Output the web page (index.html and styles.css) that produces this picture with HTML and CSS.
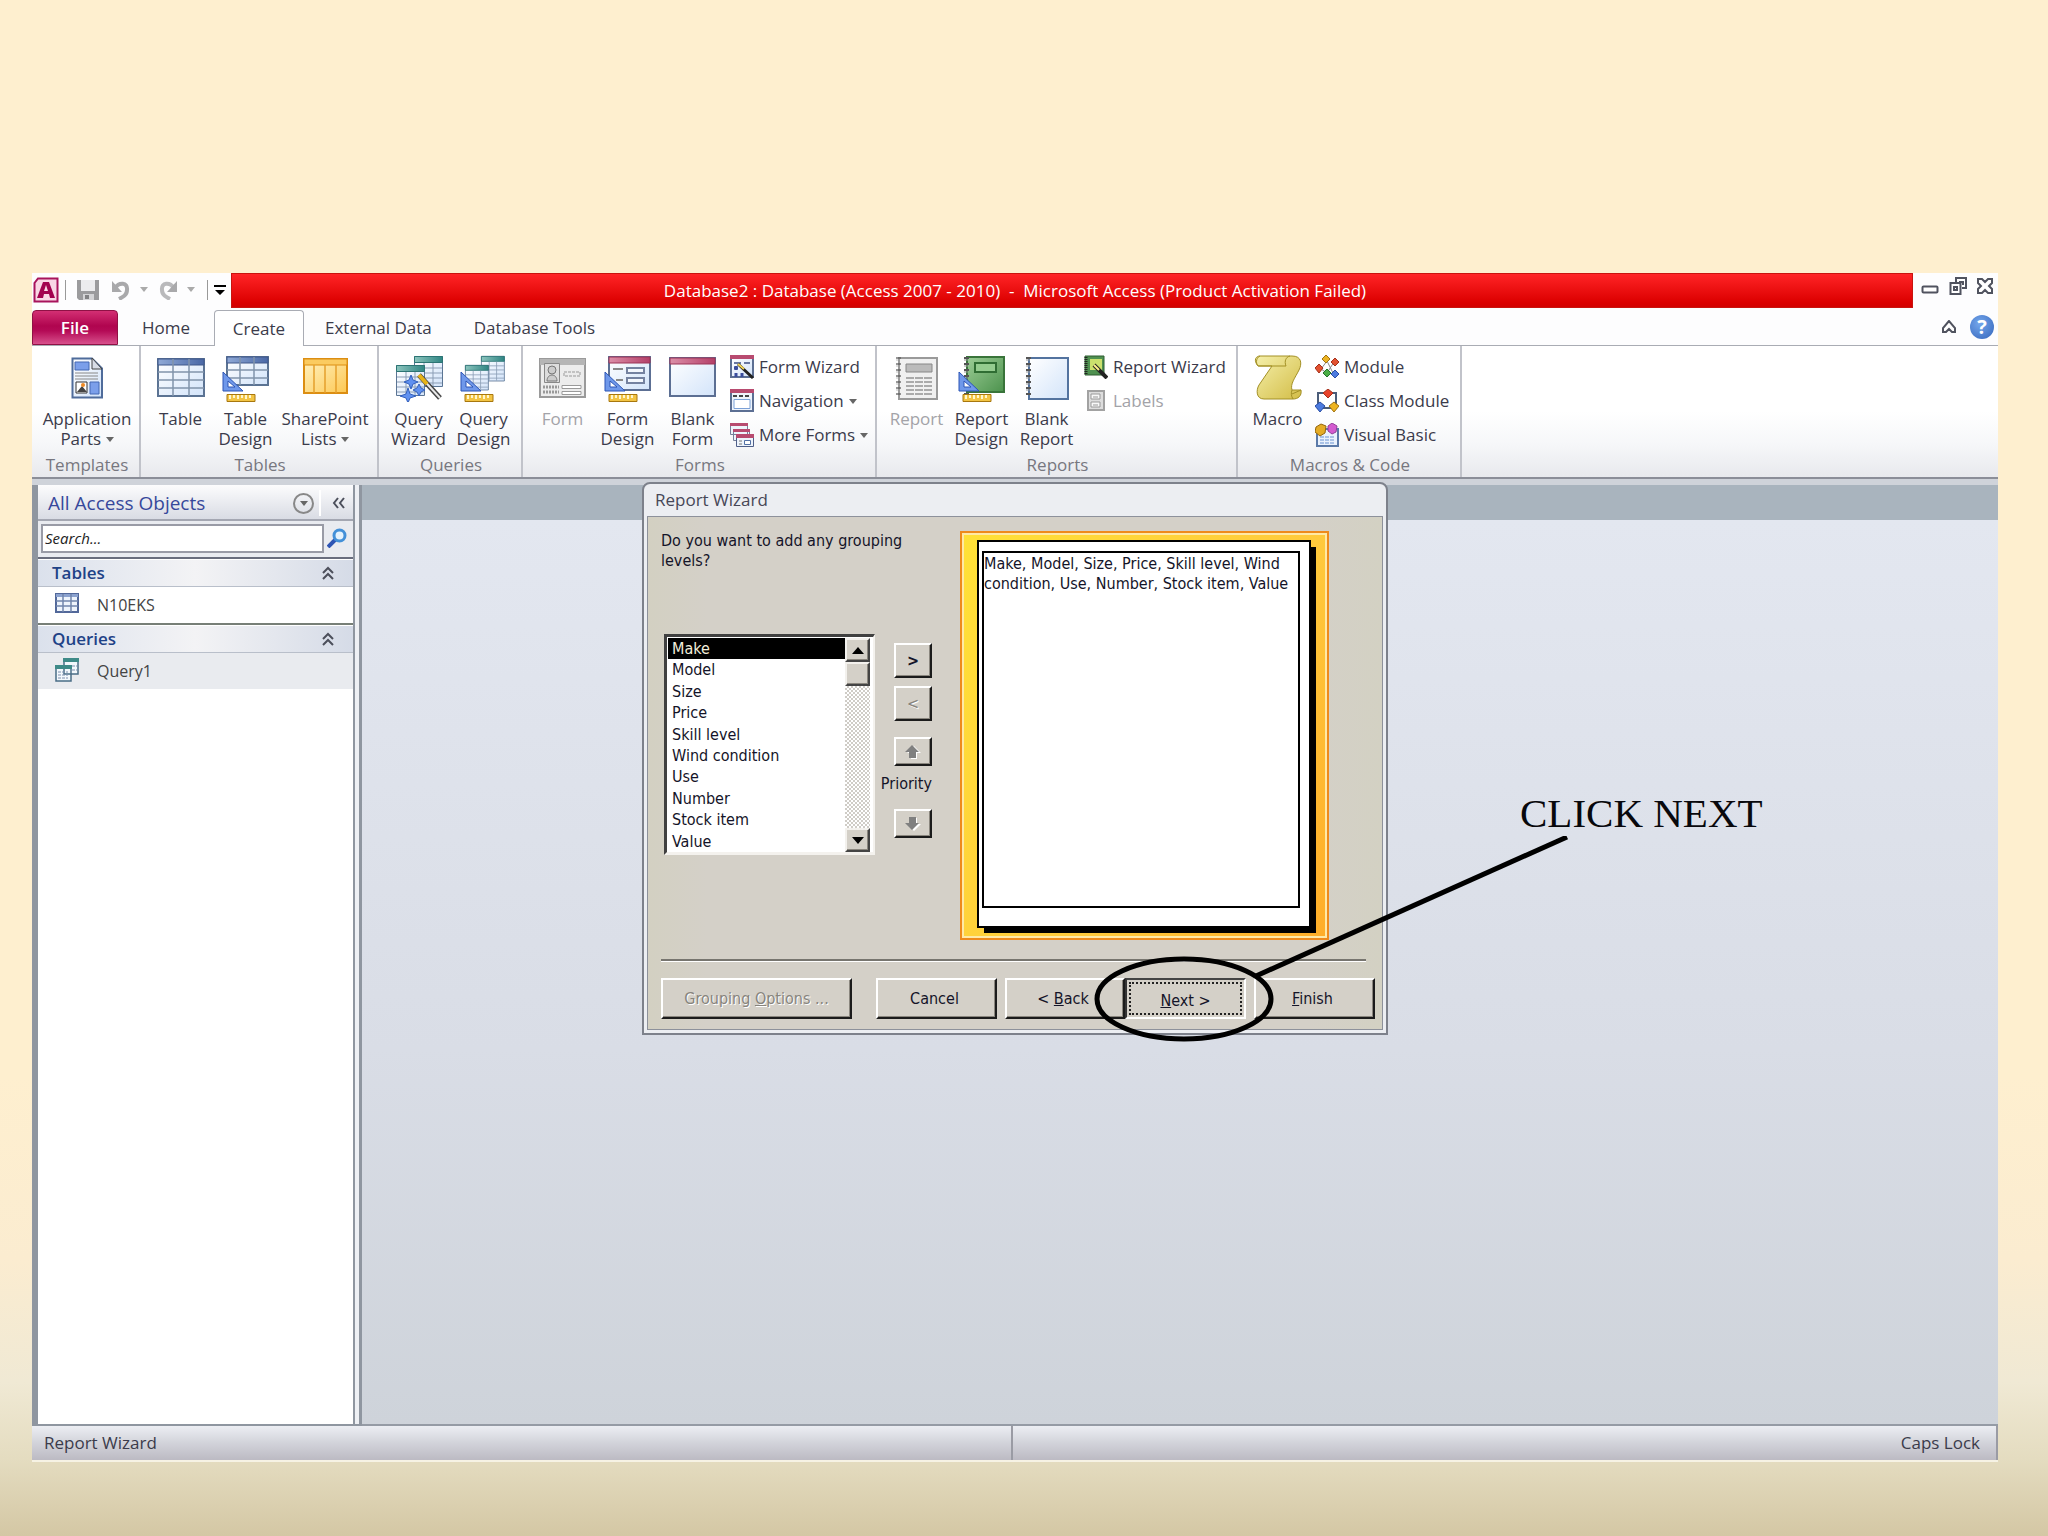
FILE: index.html
```html
<!DOCTYPE html>
<html lang="en">
<head>
<meta charset="utf-8">
<title>Database2 : Database (Access 2007 - 2010)</title>
<link rel="stylesheet" href="styles.css">
</head>
<body>
<svg class="defs" aria-hidden="true">
  <defs>
    <linearGradient id="pale" x1="0" y1="0" x2="1" y2="1"><stop offset="0" stop-color="#fff"/><stop offset="1" stop-color="#d3e4fa"/></linearGradient>
    <linearGradient id="navy" x1="0" y1="0" x2="1" y2="0"><stop offset="0" stop-color="#8fa9d6"/><stop offset="1" stop-color="#4a68a6"/></linearGradient>
    <linearGradient id="teal" x1="0" y1="0" x2="1" y2="0"><stop offset="0" stop-color="#8cc4bd"/><stop offset="1" stop-color="#2f8583"/></linearGradient>
    <linearGradient id="rose" x1="0" y1="0" x2="1" y2="0"><stop offset="0" stop-color="#dc8fa8"/><stop offset="1" stop-color="#b43f68"/></linearGradient>
    <linearGradient id="gold" x1="0" y1="0" x2="1" y2="1"><stop offset="0" stop-color="#fff3c4"/><stop offset="1" stop-color="#fdc853"/></linearGradient>
    <linearGradient id="green" x1="0" y1="0" x2="1" y2="1"><stop offset="0" stop-color="#9ccd96"/><stop offset="1" stop-color="#4c924d"/></linearGradient>
    <linearGradient id="scroll" x1="0" y1="0" x2="1" y2="1"><stop offset="0" stop-color="#f5f0ab"/><stop offset="1" stop-color="#d3bd47"/></linearGradient>
    <g id="setsquare"><path d="M0 18V37H20Z" fill="#6f98ea" stroke="#2c55b5"/><path d="M5 27v6h7z" fill="#fff" stroke="#2c55b5"/><path d="M4 40.500h28v7H4z" fill="#f2c444" stroke="#a8770e"/><path d="M7 41v4m4-4v3m4-3v4m4-4v3m4-3v4m4-4v3" stroke="#fff6ce" stroke-width="2"/></g>
    <g id="querytable"><path d="M.5.5h28v30H.5z" fill="url(#pale)" stroke="#5b7594"/><path d="M.5.500h28v6H.5z" fill="url(#teal)" stroke="#2c7474"/><path d="M1 12h27M1 17h27M1 22h27M1 27h27" stroke="#8b9db5"/><path d="M10 7v23M19 7v23" stroke="#8b9db5"/></g>
    <g id="binding"><path d="M3 4h5m-5 6h5m-5 6h5m-5 6h5m-5 6h5m-5 6h5m-5 6h5" stroke="#555" stroke-width="2"/><path d="M3 6h4m-4 6h4m-4 6h4m-4 6h4m-4 6h4m-4 6h4" stroke="#999"/></g>
  </defs>
</svg>

<main class="slide">
<div class="app">
  <header class="titlebar">
    <div class="quick">
      <svg class="i26" viewBox="0 0 26 26"><path d="M5 1.500H24.500V24.500H1.500V6z" fill="#f9d7e5" stroke="#a8145c" stroke-width="2"/><path d="M4 21 10 5h6l6 16h-5l-1-4h-5l-1 4zM11 14h4l-2-6z" fill="#a3024f"/></svg>
      <span class="bar"></span>
      <button aria-label="Save"><svg class="i24" viewBox="0 0 24 24"><path d="M1 2h22v20H3l-2-2z" fill="#9b9b9d"/><path d="M5 2h14v11H5z" fill="#ececee"/><path d="M7 16h11v6H7z" fill="#d4d4d6"/><path d="M9 17h4v4H9z" fill="#828284"/></svg></button>
      <button aria-label="Undo"><svg class="i20" viewBox="0 0 20 20"><path d="M4 8C8 2 17 2 16 10c0 5-4 7-8 9" fill="none" stroke="#a9a9ab" stroke-width="4"/><path d="M1 1v11h10z" fill="#a9a9ab"/></svg></button>
      <span class="caret soft"></span>
      <button aria-label="Redo"><svg class="i20" viewBox="0 0 20 20"><path d="M16 8C12 2 3 2 4 10c0 5 4 7 8 9" fill="none" stroke="#b9b9bb" stroke-width="4"/><path d="M19 1v11H9z" fill="#a9a9ab"/></svg></button>
      <span class="caret soft"></span>
      <span class="bar last"></span>
      <button class="customise" aria-label="Customise toolbar"><svg viewBox="0 0 12 12"><path d="M0 1h12v2H0zM1 6h10l-5 5z"/></svg></button>
    </div>
    <h1 class="caption">Database2 : Database (Access 2007 - 2010)&nbsp; -&nbsp; Microsoft Access (Product Activation Failed)</h1>
    <div class="sys">
      <button aria-label="Minimise"><svg class="i18" viewBox="0 0 18 18"><rect x="1.500" y="9.500" width="15" height="6" rx="1" class="ln"/></svg></button>
      <button aria-label="Restore"><svg class="i18" viewBox="0 0 18 18"><path d="M7 5V1h10v10h-4M10 5h4v3" class="ln"/><path d="M1.500 6h10v11h-10zM5 10h3v3H5z" class="ln"/></svg></button>
      <button aria-label="Close"><svg class="i18" viewBox="0 0 18 18"><path d="M2 2h4l3 3 3-3h4v4l-3 3 3 3v4h-4l-3-3-3 3H2v-4l3-3-3-3z" class="ln"/></svg></button>
    </div>
  </header>

  <nav class="tabs">
    <button class="tab file">File</button>
    <button class="tab home">Home</button>
    <button class="tab on">Create</button>
    <button class="tab">External Data</button>
    <button class="tab">Database Tools</button>
    <span class="tabtools">
      <button aria-label="Minimise the ribbon"><svg class="i14" viewBox="0 0 14 14"><path d="M7 1 1 8v4h3l3-3 3 3h3V8z" class="ln"/></svg></button>
      <button class="help" aria-label="Help">?</button>
    </span>
  </nav>

  <section class="ribbon">
    <div class="group"><div class="tools">
      <button class="big wide"><svg viewBox="0 0 48 48"><path d="M9.500 4.500H29l10 10V43.500H9.500z" fill="url(#pale)" stroke="#4f6c9b" stroke-width="2"/><path d="M29 4v11h10z" fill="#d8dde6" stroke="#444"/><path d="M12 8h14v8H12zM27 28h9v12h-9z" fill="#7b9fea" stroke="#4468b4"/><path d="M12 19h23M12 22h23M12 25h23" stroke="#888"/><path d="M13 28h11v11H13z" fill="#fff" stroke="#333"/><path d="m14 38 5-6 5 6z" fill="#444"/><circle cx="20" cy="31" r="2" fill="#ee8a25"/></svg><span>Application<br>Parts <i class="caret"></i></span></button>
    </div><h2>Templates</h2></div>

    <div class="group"><div class="tools">
      <button class="big"><svg viewBox="0 0 48 48"><path d="M1 5h46v37H1z" fill="url(#pale)" stroke="#5b7393" stroke-width="2"/><path d="M1 5h46v6H1z" fill="url(#navy)" stroke="#41598a"/><path d="M1 18h46M1 26h46M1 34h46M16 5v37M32 5v37" stroke="#8194ab" stroke-width="1.500"/></svg><span>Table</span></button>
      <button class="big"><svg viewBox="0 0 48 48"><path d="M5 3h41v28H5z" fill="url(#pale)" stroke="#5b7393" stroke-width="2"/><path d="M5 3h41v6H5z" fill="url(#navy)" stroke="#41598a"/><path d="M5 16h41M5 24h41M18 3v28M32 3v28" stroke="#8194ab" stroke-width="1.500"/><use href="#setsquare" x="1"/></svg><span>Table<br>Design</span></button>
      <button class="big wide"><svg viewBox="0 0 48 48"><path d="M3 5h43v34H3z" fill="url(#gold)" stroke="#dc8e12" stroke-width="2"/><path d="M3 5h43v6H3z" fill="#fbcb60" stroke="#dc8e12"/><path d="M13 11v28M24 11v28M35 11v28" stroke="#e5a02c" stroke-width="1.500"/></svg><span>SharePoint<br>Lists <i class="caret"></i></span></button>
    </div><h2>Tables</h2></div>

    <div class="group"><div class="tools">
      <button class="big"><svg viewBox="0 0 48 48"><use href="#querytable" x="19" y="2"/><use href="#querytable" x="1" y="11"/><path d="m24 21 21 23" stroke="#444" stroke-width="5"/><path d="m24 21 21 23" stroke="#e9e9e9" stroke-width="2"/><path d="m24 21 8 9" stroke="#e6b317" stroke-width="4"/><path d="m16 21 2 5 5 2-5 2-2 5-2-5-5-2 5-2zM24 30l2 4 4 2-4 2-2 4-2-4-4-2 4-2zM13 34l2 6 6 2-6 2-2 5-2-5-6-2 6-2z" fill="#5f90f0" stroke="#3461bd"/></svg><span>Query<br>Wizard</span></button>
      <button class="big"><svg viewBox="0 0 48 48"><use href="#querytable" transform="translate(21 2) scale(.82)"/><use href="#querytable" transform="translate(5 11) scale(.82)"/><use href="#setsquare" x="1"/></svg><span>Query<br>Design</span></button>
    </div><h2>Queries</h2></div>

    <div class="group"><div class="tools">
      <button class="big" disabled><svg viewBox="0 0 48 48"><path d="M1 5h45v38H1z" fill="#ececec" stroke="#9a9a9a" stroke-width="2"/><path d="M1 5h45v6H1z" fill="#b5b5b5"/><path d="M5.500 9.500h15v19h-15z" fill="#ddd" stroke="#888"/><circle cx="13" cy="16" r="4" fill="#ccc" stroke="#777"/><path d="M8 27c0-8 10-8 10 0z" fill="#ccc" stroke="#777"/><path d="M25 18h16v4H25z" fill="none" stroke="#999" stroke-dasharray="3 1"/><path d="M4 33h16M4 38h16" stroke="#999" stroke-width="3" stroke-dasharray="2 1"/><path d="M23 31.500h19v3H23zm0 6h19v3H23z" fill="#fff" stroke="#999"/></svg><span>Form</span></button>
      <button class="big"><svg viewBox="0 0 48 48"><path d="M5 3h41v33H5z" fill="url(#pale)" stroke="#5c6f93" stroke-width="2"/><path d="M5 3h41v6H5z" fill="url(#rose)" stroke="#9b3557"/><path d="M9 15h10M12 26h7" stroke="#888" stroke-width="2"/><path d="M23 14h17v5H23zm0 10h17v5H23z" fill="#f3f7fd" stroke="#7482a0" stroke-width="2"/><use href="#setsquare" x="1"/></svg><span>Form<br>Design</span></button>
      <button class="big"><svg viewBox="0 0 48 48"><path d="M1 4h45v38H1z" fill="url(#pale)" stroke="#5c6f93" stroke-width="2"/><path d="M1 4h45v6H1z" fill="url(#rose)" stroke="#9b3557"/></svg><span>Blank<br>Form</span></button>
      <div class="stack">
        <button class="small"><svg viewBox="0 0 24 24"><path d="M1 1h22v21H1z" fill="url(#pale)" stroke="#5c6f93" stroke-width="2"/><path d="M0 0h24v4H0z" fill="#b84b70"/><path d="M4 8h7m3 0h6" stroke="#6877a0" stroke-width="2"/><path d="m8 9 15 14" stroke="#222" stroke-width="3"/><path d="m8 9 6 5" stroke="#f0d457" stroke-width="2"/><path d="M4 13h4m-2-2v4m0 3v4m6-4v4" stroke="#3a4d9c" stroke-width="3"/></svg>Form Wizard</button>
        <button class="small"><svg viewBox="0 0 24 24"><path d="M1 1h22v21H1z" fill="#eef4fc" stroke="#5c6f93" stroke-width="2"/><path d="M0 0h24v4H0z" fill="#b84b70"/><path d="M3 7h18" stroke="#444" stroke-width="2" stroke-dasharray="4 2"/><path d="M4 10.500h16v9H4z" fill="#fff" stroke="#7ba0d6"/></svg>Navigation <i class="caret"></i></button>
        <button class="small"><svg viewBox="0 0 24 24"><g fill="#eef4fc" stroke="#77809a"><path d="M.5.500h17v11H.5zM3.500 6.500h16v11h-16z"/></g><path d="M0 0h18v3H0zM3 6h17v3H3z" fill="#b84b70"/><path d="M6.500 11.500h17v12h-17z" fill="#eef4fc" stroke="#4f5f88"/><path d="M6 11h18v4H6z" fill="#b84b70"/><path d="M9 18h3m-3 3h3" stroke="#777"/><path d="M14.500 17.500h6v4h-6z" fill="#fff" stroke="#5270a5"/></svg>More Forms <i class="caret"></i></button>
      </div>
    </div><h2>Forms</h2></div>

    <div class="group"><div class="tools">
      <button class="big" disabled><svg viewBox="0 0 48 48"><path d="M6 4h38v41H6z" fill="#f0f0f0" stroke="#9a9a9a" stroke-width="2"/><use href="#binding" opacity=".6"/><path d="M13 10h26v8H13z" fill="#bbb" stroke="#888"/><path d="M13 24h26M13 28h26M13 32h26M13 36h26M13 40h26" stroke="#aaa" stroke-width="2" stroke-dasharray="8 1"/></svg><span>Report</span></button>
      <button class="big"><svg viewBox="0 0 48 48"><path d="M9 3h37v35H9z" fill="url(#green)" stroke="#39743a" stroke-width="2"/><path d="M17 9h21v9H17z" fill="#94cc8f" stroke="#2f6d33" stroke-width="2"/><use href="#binding" x="3"/><use href="#setsquare" x="1"/></svg><span>Report<br>Design</span></button>
      <button class="big"><svg viewBox="0 0 48 48"><path d="M6 4h39v41H6z" fill="url(#pale)" stroke="#53739f" stroke-width="2"/><use href="#binding"/></svg><span>Blank<br>Report</span></button>
      <div class="stack roomy">
        <button class="small"><svg viewBox="0 0 24 24"><path d="M1 1h19v19H1z" fill="#4f9150" stroke="#2e5d31"/><path d="M6 4h12v11H6z" fill="#cbe06d"/><path d="M2 2v18" stroke="#222" stroke-width="3" stroke-dasharray="1 1"/><path d="m10 10 13 13" stroke="#222" stroke-width="4"/><path d="m10 10 5 5" stroke="#fff08a" stroke-width="2"/></svg>Report Wizard</button>
        <button class="small" disabled><svg viewBox="0 0 24 24"><path d="M4 2h16v19H4z" fill="#ddd" stroke="#a2a2a2" stroke-width="2"/><path d="M7 5h9v5H7zm0 8h9v5H7z" fill="#f8f8f8" stroke="#999"/><path d="M9 8h5m-5 8h5" stroke="#999"/></svg>Labels</button>
      </div>
    </div><h2>Reports</h2></div>

    <div class="group"><div class="tools">
      <button class="big"><svg viewBox="0 0 48 48"><path d="M4 12C-1 6 2 2 6 2h32c10 0 10 8 7 14-4 8-9 14-7 20h9c1 6-3 9-8 9H10C2 45 2 36 5 31l13-19z" fill="url(#scroll)" stroke="#a39025"/><path d="M6 2c-5 2-4 10-1 10h27c-2-5 0-9 4-10M38 36c-1 3-1 6 1 9m8-9-9 4" fill="none" stroke="#a39025"/></svg><span>Macro</span></button>
      <div class="stack">
        <button class="small"><svg viewBox="0 0 24 24"><path d="m6 14 6-8 6 12M6 14l6 4 7-11" fill="none" stroke="#888"/><path d="m11 0 4 4-4 4-4-4z" fill="#edb422" stroke="#a17311"/><path d="m20 3 4 4-4 4-4-4zM4 9l4 4-4 5-4-5z" fill="#e2512f" stroke="#a3301b"/><path d="m12 14 4 4-4 4-4-4z" fill="#4aad45" stroke="#24722c"/><path d="m20 15 4 4-4 4-4-4z" fill="#4c7bdf" stroke="#2a4ea5"/></svg>Module</button>
        <button class="small"><svg viewBox="0 0 24 24"><path d="M3 4h18v15H3z" fill="#fff" stroke="#4b5d79" stroke-width="2"/><path d="m13 0 5 4-5 5-5-5z" fill="#e8432b" stroke="#a3301b"/><path d="m5 13 5 4-5 6-5-6z" fill="#4c7bdf" stroke="#2a4ea5"/><path d="m19 13 5 4-5 6-5-6z" fill="#edb422" stroke="#a17311"/></svg>Class Module</button>
        <button class="small"><svg viewBox="0 0 24 24"><path d="M2 6h21v17H2z" fill="#eaf2fd" stroke="#5b7aa9" stroke-width="2"/><path d="M5 14h15M5 17h15M5 20h15" stroke="#6b93d1" stroke-dasharray="4 1"/><path d="m6 1 5 2-1 7-5 3-5-4 1-5z" fill="#e5ac26" stroke="#94660c"/><path d="m17 0 5 3-1 6-4 2-4-3v-5z" fill="#d35bd0" stroke="#913f98"/></svg>Visual Basic</button>
      </div>
    </div><h2>Macros &amp; Code</h2></div>
  </section>

  <div class="desk">
    <aside class="pane">
      <div class="panehead"><h2>All Access Objects</h2><button class="round" aria-label="Choose objects"><i class="caret"></i></button><button class="fold" aria-label="Close pane"><svg class="i14" viewBox="0 0 14 14"><path d="M7 2 3 7l4 5M13 2 9 7l4 5" class="chev"/></svg></button></div>
      <div class="search"><input type="text" placeholder="Search..." aria-label="Search"><button aria-label="Go"><svg class="i20" viewBox="0 0 20 20"><path d="m1 19 8-8" stroke="#2e55b4" stroke-width="4"/><circle cx="12.500" cy="7.500" r="5.500" fill="#e4f2fd" stroke="#4390d8" stroke-width="3"/></svg></button></div>
      <section class="objs">
        <h3>Tables<svg class="i14" viewBox="0 0 14 14"><path d="M2 7l5-5 5 5M2 13l5-5 5 5" class="chev"/></svg></h3>
        <a href="#" class="obj"><svg class="i24" viewBox="0 0 24 24"><path d="M1 2h22v18H1z" fill="#eef4fc" stroke="#52689a" stroke-width="2"/><path d="M1 2h22v3H1z" fill="#8ba2cf"/><path d="M1 9h22M1 14h22M8 2v18M16 2v18" stroke="#7185ac" stroke-width="1.500"/></svg>N10EKS</a>
      </section>
      <section class="objs">
        <h3>Queries<svg class="i14" viewBox="0 0 14 14"><path d="M2 7l5-5 5 5M2 13l5-5 5 5" class="chev"/></svg></h3>
        <a href="#" class="obj sel"><svg class="i24" viewBox="0 0 24 24"><g fill="#f3f8fc" stroke="#4a6d86" stroke-width="1.500"><path d="M9 1h14v15H9zM1 8h15v15H1z"/></g><path d="M8 0h16v4H8zM0 7h17v4H0z" fill="#3e8a88"/><path d="M3 14h10M3 17h10M3 20h10M17 8h5M17 12h5" stroke="#7e8fae" stroke-dasharray="3 1"/></svg>Query1</a>
      </section>
    </aside>
    <div class="canvas"></div>

    <section class="dialog" role="dialog" aria-labelledby="dlg">
      <h2 id="dlg">Report Wizard</h2>
      <div class="dbody">
        <div class="cols">
          <div class="pick">
            <p>Do you want to add any grouping levels?</p>
            <div class="row">
              <div class="list">
                <ul role="listbox" aria-label="Fields">
                  <li role="option" aria-selected="true">Make</li><li role="option">Model</li><li role="option">Size</li><li role="option">Price</li><li role="option">Skill level</li><li role="option">Wind condition</li><li role="option">Use</li><li role="option">Number</li><li role="option">Stock item</li><li role="option">Value</li>
                </ul>
                <div class="scroll"><button class="btn" aria-label="Scroll up"><svg viewBox="0 0 12 7"><path d="M0 7 6 0l6 7z"/></svg></button><span class="btn thumb"></span><button class="btn down" aria-label="Scroll down"><svg viewBox="0 0 12 7"><path d="M0 0h12L6 7z"/></svg></button></div>
              </div>
              <div class="moves">
                <button class="btn move"><b>&gt;</b></button>
                <button class="btn move" disabled>&lt;</button>
                <button class="btn order up" disabled aria-label="Raise priority"><svg viewBox="0 0 16 14"><path d="M9 1l7 7h-4v6H6V8H2z" fill="#fff"/><path d="M7 0l7 7h-3v6H4V7H0z" fill="#808080"/></svg></button>
                <span>Priority</span>
                <button class="btn order" disabled aria-label="Lower priority"><svg viewBox="0 0 16 14"><path d="M9 14l7-7h-4V1H6v6H2z" fill="#fff"/><path d="M7 13l7-7h-3V0H4v6H0z" fill="#808080"/></svg></button>
              </div>
            </div>
          </div>
          <div class="preview"><div class="paper"><p>Make, Model, Size, Price, Skill level, Wind condition, Use, Number, Stock item, Value</p></div></div>
        </div>
        <hr>
        <div class="actions">
          <button class="btn opts" disabled><span>Grouping <u>O</u>ptions ...</span></button>
          <button class="btn cancel">Cancel</button>
          <button class="btn back"><span>&lt; <u>B</u>ack</span></button>
          <button class="btn next"><span><u>N</u>ext &gt;</span></button>
          <button class="btn finish"><span><u>F</u>inish</span></button>
        </div>
      </div>
    </section>

    <svg class="ink" viewBox="0 0 480 206" aria-hidden="true"><ellipse cx="91" cy="163" rx="87" ry="40"/><path d="M163 140 474 1"/></svg>
    <p class="note">CLICK NEXT</p>
  </div>

  <footer class="status"><span>Report Wizard</span><span class="caps">Caps Lock</span></footer>
</div>
</main>
</body>
</html>
```
FILE: styles.css
```css
* { box-sizing: border-box; }
body { margin: 0; font: 17px/20px "Open Sans", "Noto Sans", sans-serif; color: #3b3b4b; }
h1, h2, h3, p, ul { margin: 0; padding: 0; font-weight: 400; font-size: inherit; list-style: none; }
button { font: inherit; color: inherit; background: none; border: 0; padding: 0; }
svg { display: block; flex: none; }
.defs { position: absolute; width: 0; height: 0; }
.i14 { width: 14px; height: 14px; }
.i18 { width: 18px; height: 18px; }
.i20 { width: 20px; height: 20px; }
.i24 { width: 24px; height: 24px; }
.i26 { width: 26px; height: 26px; }
.ln { fill: #fff; stroke: #50535f; stroke-width: 2; }
.chev { fill: none; stroke: #4c4f5b; stroke-width: 2; }
.caret { display: inline-block; vertical-align: 3px; border: 4px solid transparent; border-top: 5px solid #666; border-bottom: 0; }
.caret.soft { border-top-color: #aaa; }

.slide { min-height: 100vh; padding: 273px 50px 74px 32px; display: flex; background: linear-gradient(#feefcf 0 70%, #fbecd0 82%, #f0e9d4 90%, #e4dcc0 95%, #d4c7a4); }
.app { flex: 1; display: flex; flex-direction: column; background: #fdfdfe; min-width: 1500px; }

.titlebar { display: flex; height: 37px; }
.quick { width: 199px; display: flex; align-items: center; padding: 0 5px 4px 1px; }
.bar { width: 2px; height: 20px; background: #999; margin: 0 10px 0 6px; }
.bar.last { margin: 0 6px 0 12px; }
.quick .caret { margin: 0 10px 0 9px; }
.quick .caret + .bar { margin-left: 2px; }
.quick button + button { margin-left: 11px; }
.customise svg { width: 12px; height: 12px; }
.caption { flex: 1; height: 35px; border: 1px solid #c9140f; background: linear-gradient(#ff2426, #dc0000 85%, #d20000); color: #fff; text-align: center; line-height: 34px; padding-right: 114px; font-weight: 500; }
.sys { width: 85px; display: flex; justify-content: space-between; padding: 4px 4px 0 8px; align-items: flex-start; }

.tabs { display: flex; height: 36px; border-bottom: 1px solid #a9acb4; }
.tab { height: 36px; padding: 0 21px; }
.tab.file { width: 86px; height: 35px; padding: 0; border-radius: 4px 4px 0 0; border: 1px solid #8f1145; color: #fff; font-weight: 600; background: linear-gradient(#d32f73, #b0054f 45%, #b40a56 60%, #d8508c); }
.tab.home { width: 96px; }
.tab.on { width: 90px; padding: 0; background: #fff; border: 1px solid #a9acb4; border-bottom: 0; border-radius: 4px 4px 0 0; }
.tabtools { margin-left: auto; display: flex; align-items: center; gap: 14px; padding: 0 4px 2px 0; }
.help { width: 24px; height: 24px; border-radius: 50%; background: radial-gradient(circle at 40% 35%, #74a7ec, #3465bb); color: #fff; font-weight: 700; font-size: 20px; }

.ribbon { display: flex; height: 133px; padding-left: 1px; background: linear-gradient(#fff 50%, #f6f7f9 75%, #e8e9ed); border-bottom: 2px solid #8b8e98; }
.group { display: flex; flex-direction: column; border-right: 2px solid #c1c3ca; padding: 0 5px 0 7px; }
.tools { display: flex; flex: 1; }
.group h2 { text-align: center; height: 24px; line-height: 24px; color: #77777f; }
.big { width: 65px; display: flex; flex-direction: column; align-items: center; gap: 7px; padding-top: 8px; white-space: nowrap; }
.big.wide { width: 94px; }
.big svg { width: 48px; height: 48px; }
.ribbon button:disabled { color: #a3a3a8; }
.stack { width: 140px; margin-left: 5px; padding-top: 4px; }
.stack.roomy { width: 147px; }
.small { display: flex; align-items: center; gap: 5px; height: 34px; white-space: nowrap; }
.small svg { width: 24px; height: 24px; }

.desk { flex: 1; display: flex; position: relative; border-top: 6px solid #cfd3da; min-height: 560px; }
.pane { width: 330px; border: solid #8f96a0; border-width: 0 3px 2px 6px; padding-right: 6px; background: linear-gradient(90deg, #fff 315px, #8f96a0 315px 317px, #eef0f4 317px); }
.panehead { display: flex; align-items: center; height: 36px; padding: 2px 8px 0 10px; background: linear-gradient(#fcfcfd, #d9dce4); border-bottom: 2px solid #a4a7b2; }
.panehead h2 { flex: 1; font-size: 19px; color: #37489b; }
.round { width: 21px; height: 21px; border: 2px solid #888; border-radius: 50%; display: flex; align-items: center; justify-content: center; }
.fold { border-left: 2px solid #fff; margin-left: 5px; padding: 6px 0 6px 10px; }
.search { display: flex; align-items: center; gap: 3px; height: 38px; padding: 0 0 2px 3px; background: #e9ebf0; border-bottom: 2px solid #696d7d; }
.search input { flex: 1; min-width: 0; height: 29px; border: 2px solid #999ba6; background: #fff; font: italic 15px "Open Sans", sans-serif; padding: 0 2px; }
.search input::placeholder { color: #222; opacity: 1; }
.search button { margin-right: 6px; }
.objs { border-bottom: 2px solid #777f77; }
.objs:last-child { border: 0; }
.objs h3 { display: flex; justify-content: space-between; align-items: center; height: 27px; margin-top: 1px; padding: 0 18px 0 14px; color: #1e4287; font-weight: 600; background: linear-gradient(90deg, #dbe1ec, #f3f3f5 50%, #d5dbe7); border-bottom: 1px solid #b9bfca; }
.obj { display: flex; gap: 18px; padding: 5px 17px 7px; height: 36px; color: #444; text-decoration: none; font-size: 16px; line-height: 26px; }
.sel { background: #e9ebef; }
.canvas { flex: 1; border-bottom: 2px solid #959ba5; background: linear-gradient(#a9b4be 35px, #e3e7f0 35px, #d9dde6 60%, #ced3da); }

.dialog { position: absolute; left: 610px; top: -3px; width: 746px; border: 2px solid #7d818b; border-radius: 8px 8px 0 0; background: #eceef2; padding: 0 3px 3px; color: #141428; }
.dialog h2 { height: 32px; line-height: 31px; padding-left: 8px; color: #474757; }
.dbody { border: 1px solid #8d919b; background: linear-gradient(90deg, #d3d0c2, #d4d0c8 8% 90%, #d3d1c3); padding: 14px 7px 10px 13px; font: 16px/20px "DejaVu Sans Condensed", sans-serif; }
.cols { display: flex; }
.pick { width: 299px; }
.pick p { width: 262px; height: 103px; }
.row { display: flex; padding-left: 3px; gap: 2px; }
.list { width: 211px; height: 221px; display: flex; border: solid; border-width: 3px 2px 3px 3px; border-color: #404040 #f4f2ee #f4f2ee #404040; background: #fff; padding: 1px 3px 0 1px; }
.list ul { flex: 1; height: 214px; display: grid; grid-auto-rows: 1fr; line-height: 21px; }
.list li { padding-left: 4px; }
.list li[aria-selected] { background: #000; color: #f2eeda; }
.btn { border: solid; border-width: 2px; border-color: #fff #1b1b1b #1b1b1b #fff; background: #d4d0c8; box-shadow: inset -1px -1px #8a867e; display: flex; align-items: center; justify-content: center; white-space: nowrap; }
.btn:disabled { color: #87847d; text-shadow: 1px 1px #fff; }
.scroll { width: 25px; display: flex; flex-direction: column; background: repeating-conic-gradient(#cfccc6 0 25%, #fff 0 50%) 0 0 / 4px 4px; }
.scroll .btn { height: 24px; border-color: #f3f1ed #444 #444 #f3f1ed; }
.scroll svg { width: 12px; height: 7px; }
.scroll .down { margin-top: auto; }
.moves { width: 55px; display: flex; flex-direction: column; align-items: flex-end; padding-top: 9px; }
.move { width: 38px; height: 35px; margin-bottom: 8px; }
.order { width: 38px; height: 29px; }
.up { margin-top: 8px; }
.order svg { width: 16px; height: 14px; }
.moves span { margin: 8px 0 15px; }
.preview { width: 369px; height: 409px; border: 2px solid #ee8a1c; outline: 2px solid #ffe9a5; outline-offset: -4px; background: linear-gradient(120deg, #ffe137, #ffca3c 60%, #ffad28); padding: 7px 16px 9px 15px; display: flex; }
.paper { flex: 1; border: 2px solid #000; background: #fff; padding: 9px 9px 18px 3px; display: flex; box-shadow: 6px 6px 0 -1px #000; margin-bottom: 1px; }
.paper p { flex: 1; border: 2px solid #000; padding: 1px 0 0; }
hr { margin: 19px 9px 16px 0; border: 0; height: 3px; background: linear-gradient(#77756f 2px, #fff 2px); }
.actions { display: flex; }
.actions .btn { height: 41px; width: 121px; margin-right: 8px; }
.actions .opts { width: 191px; margin: 0 24px 0 0; }
.actions .cancel { padding-right: 4px; }
.actions .back { width: 120px; margin-right: 0; padding-right: 4px; }
.actions .next { border-color: #444 #fff #fff #333; box-shadow: none; padding: 2px; }
.next span { flex: 1; height: 33px; line-height: 33px; border: 2px dotted #222; text-align: center; }
.actions .finish { margin-right: 0; padding-right: 4px; }

.ink { position: absolute; left: 1061px; top: 351px; width: 480px; height: 206px; fill: none; stroke: #000; stroke-width: 5; }
.note { position: absolute; left: 1488px; top: 304px; font: 41px/48px "Liberation Serif", serif; color: #08080c; white-space: nowrap; }

.status { height: 36px; display: flex; border-bottom: 2px solid #f6f2e4; background: linear-gradient(#eceef3, #d2d3da 50%, #bcbac3); line-height: 34px; padding-left: 12px; }
.status span { flex: 1; border-right: 2px solid #9a9ba4; }
.status .caps { text-align: right; padding-right: 16px; }
```
